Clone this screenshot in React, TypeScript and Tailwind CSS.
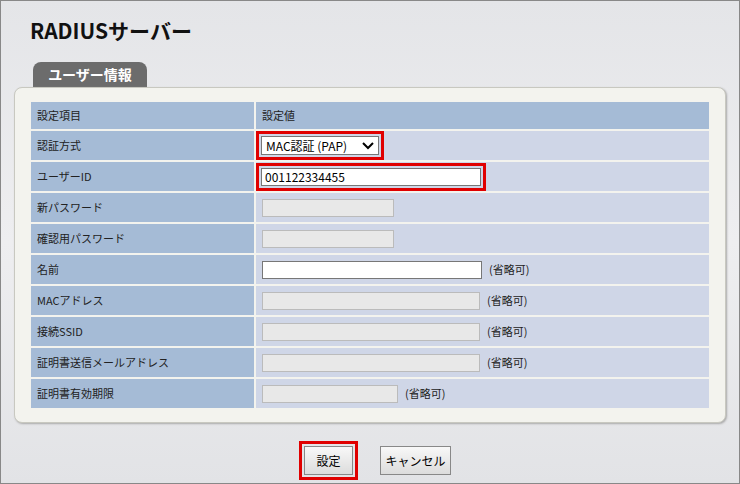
const font = { fontFamily: '"Noto Sans CJK JP", "Liberation Sans", sans-serif' };

type Row = { label: string; kind: 'select' | 'text' | 'disabled'; w: string; value?: string; opt?: boolean; red?: boolean };

const rows: Row[] = [
  { label: '認証方式', kind: 'select', w: 'w-[118px]', red: true },
  { label: 'ユーザーID', kind: 'text', w: 'w-[220px]', value: '001122334455', red: true },
  { label: '新パスワード', kind: 'disabled', w: 'w-[132px]' },
  { label: '確認用パスワード', kind: 'disabled', w: 'w-[132px]' },
  { label: '名前', kind: 'text', w: 'w-[220px]', opt: true },
  { label: 'MACアドレス', kind: 'disabled', w: 'w-[218px]', opt: true },
  { label: '接続SSID', kind: 'disabled', w: 'w-[218px]', opt: true },
  { label: '証明書送信メールアドレス', kind: 'disabled', w: 'w-[218px]', opt: true },
  { label: '証明書有効期限', kind: 'disabled', w: 'w-[136px]', opt: true },
];

function Field({ r }: { r: Row }) {
  let el;
  if (r.kind === 'select') {
    el = (
      <div className="flex h-[19px] w-[118px] items-center justify-between border border-[#777] bg-white px-1 text-[12px] text-black">
        <span>MAC認証 (PAP)</span>
        <svg width="12" height="8" viewBox="0 0 12 8"><path d="M1 1l5 5 5-5" stroke="#000" strokeWidth="2" fill="none" /></svg>
      </div>
    );
  } else if (r.kind === 'text') {
    el = <div className={`${r.w} h-[18px] border border-[#777] bg-white px-[3px] text-[12px] leading-[16px] text-black`}>{r.value}</div>;
  } else {
    el = <div className={`${r.w} h-[18px] border border-[#bbb] bg-[#e8e8e8]`} />;
  }
  return (
    <div className="flex items-center">
      {r.red ? <div className="border-[3px] border-[#e00000] p-[2px]">{el}</div> : <div className="px-[5px]">{el}</div>}
      {r.opt && <span className="ml-[2px] text-[11px] text-[#222]">(省略可)</span>}
    </div>
  );
}

export default function App() {
  return (
    <div style={font} className="h-[484px] w-[740px] border border-[#888] bg-[linear-gradient(180deg,#e4e5e8,#eeeef0_50%,#e2e3e6)]">
      <h1 className="pl-[29px] pt-[14px] text-[21px] font-bold leading-[30px] text-[#111]">RADIUSサーバー</h1>
      <div className="ml-[32px] mt-[17px] flex h-[25px] w-[114px] items-center justify-center rounded-t-[8px] bg-[#6c6c6c] text-[14px] font-bold text-white">
        ユーザー情報
      </div>
      <div className="mx-[13px] rounded-[8px] border border-[#c8c8c0] bg-[#f3f3ee] px-[16px] py-[14px] shadow-[1px_1px_2px_#aaa]">
        <div className="flex flex-col gap-[2px] text-[11px] text-[#222]">
          <div className="flex h-[27px] gap-[2px]">
            <div className="flex w-[223px] items-center bg-[#a5bbd6] pl-[6px]">設定項目</div>
            <div className="flex flex-1 items-center bg-[#a5bbd6] pl-[6px]">設定値</div>
          </div>
          {rows.map((r) => (
            <div key={r.label} className="flex h-[29px] gap-[2px]">
              <div className="flex w-[223px] items-center bg-[#a5bbd6] pl-[6px]">{r.label}</div>
              <div className={`flex flex-1 items-center bg-[#cfd6e7] ${r.red ? 'pl-0' : 'pl-[1px]'}`}>
                <Field r={r} />
              </div>
            </div>
          ))}
        </div>
      </div>
      <div className="mt-[18px] flex justify-center gap-[22px] pl-[10px]">
        <div className="border-[3px] border-[#e00000] p-[2px]">
          <button className="h-[29px] w-[49px] border border-[#888] bg-[linear-gradient(#f8f8f8,#dcdcdc)] text-[12px]">設定</button>
        </div>
        <div className="pt-[5px]">
          <button className="h-[29px] w-[71px] border border-[#888] bg-[linear-gradient(#f8f8f8,#dcdcdc)] text-[12px]">キャンセル</button>
        </div>
      </div>
    </div>
  );
}
